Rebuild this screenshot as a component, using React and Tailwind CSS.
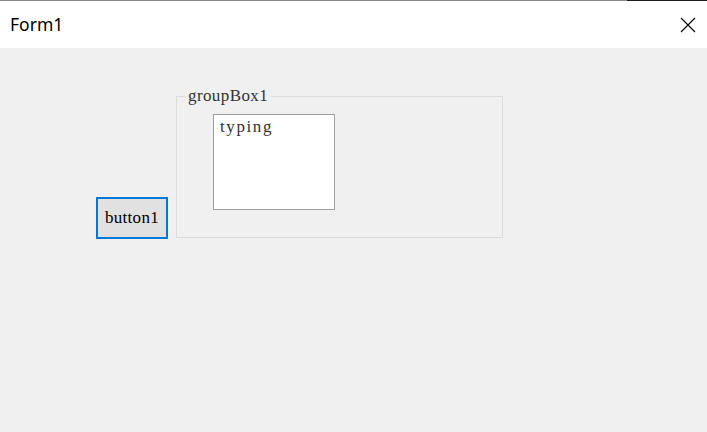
import React from "react";

const serif = { fontFamily: '"Liberation Serif", "Times New Roman", serif' };

const App = () => {
  return (
    <div className="w-[707px] h-[432px] bg-[#f0f0f0] flex flex-col overflow-hidden">
      {/* Window top edge */}
      <div className="flex h-[1px]">
        <div className="flex-1 bg-[#8a8a8a]" />
        <div className="w-[80px] bg-[#1c1c1c]" />
      </div>

      {/* Title bar */}
      <div className="h-[47px] bg-white flex items-center justify-between">
        <span
          className="pl-[10px] text-[17.5px] text-black"
          style={{ fontFamily: '"Noto Sans", "Liberation Sans", sans-serif' }}
        >
          Form1
        </span>
        <svg width="16" height="16" viewBox="0 0 16 16" className="mr-[11px]">
          <path d="M1 1 L15 15 M15 1 L1 15" stroke="#000" strokeWidth="1.1" />
        </svg>
      </div>

      {/* Client area */}
      <div className="flex items-start pl-[96px] pt-[48px]">
        {/* button1 */}
        <button
          className="mt-[101px] w-[72px] h-[42px] border-2 border-[#0078d7] bg-[#e1e1e1] text-[17px] text-black flex items-center justify-center tracking-[0.3px]"
          style={serif}
        >
          button1
        </button>

        {/* groupBox1 */}
        <div className="relative ml-[8px] w-[327px] h-[142px] border border-[#dcdcdc] pl-[36px] pt-[17px]">
          <span
            className="absolute -top-[10px] left-[8px] bg-[#f0f0f0] px-[3px] text-[17px] leading-[18px] text-[#333] tracking-[0.4px]"
            style={serif}
          >
            groupBox1
          </span>
          <div className="w-[122px] h-[96px] bg-white border border-[#a0a0a0] pl-[6px] leading-[22px]">
            <span className="text-[17px] text-[#333] tracking-[1.6px]" style={serif}>
              typing
            </span>
          </div>
        </div>
      </div>
    </div>
  );
};

export default App;
